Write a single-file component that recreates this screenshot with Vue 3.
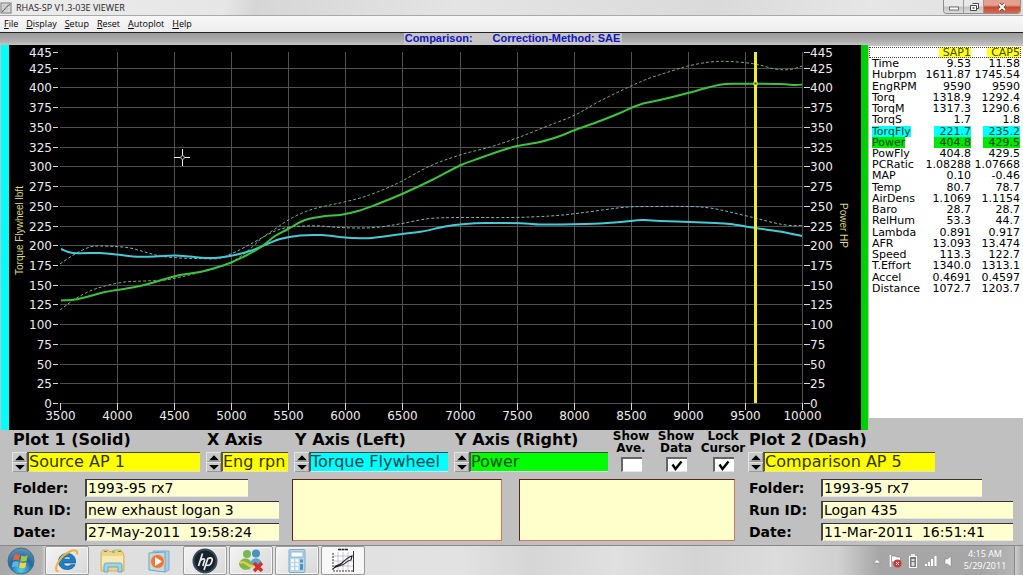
<script setup>
import { ref } from 'vue'

const menus = ['File', 'Display', 'Setup', 'Reset', 'Autoplot', 'Help']

const left = 60.5
const bottom = 403.5
const xAt = (rpm) => Math.round(left + ((rpm - 3500) * 742) / 6500 - 0.5) + 0.5
const yAt = (v) => Math.round(bottom - v * 0.7888 - 0.5) + 0.5

const rpmTicks = Array.from({ length: 14 }, (_, i) => 3500 + i * 500)
const valueTicks = [...Array.from({ length: 18 }, (_, i) => i * 25), 445]

function smooth(points) {
  let d = `M${points[0][0]} ${points[0][1]}`
  for (let i = 0; i < points.length - 1; i++) {
    const p0 = points[i - 1] || points[i]
    const p1 = points[i]
    const p2 = points[i + 1]
    const p3 = points[i + 2] || p2
    const c1 = [p1[0] + (p2[0] - p0[0]) / 6, p1[1] + (p2[1] - p0[1]) / 6]
    const c2 = [p2[0] - (p3[0] - p1[0]) / 6, p2[1] - (p3[1] - p1[1]) / 6]
    d += `C${c1.map((n) => n.toFixed(1)).join(' ')} ${c2.map((n) => n.toFixed(1)).join(' ')} ${p2[0]} ${p2[1]}`
  }
  return d
}

const curves = [
  {
    kind: 'torque dashed',
    d: smooth([[60, 264], [75, 254], [90, 247], [100, 246], [115, 246.5], [130, 248], [145, 252], [160, 256], [180, 258], [200, 258.5], [218, 258.5], [233, 253], [245, 247], [258, 240], [275, 231], [290, 227], [305, 226], [320, 226], [340, 227.5], [360, 228], [380, 227], [402, 223.5], [430, 218.5], [460, 217.5], [510, 217.5], [550, 216], [580, 213], [610, 209], [628, 207], [650, 206.5], [690, 206.5], [710, 208], [730, 212], [755, 218], [775, 223], [790, 225.5], [802, 225.5]])
  },
  {
    kind: 'power dashed',
    d: smooth([[60, 310], [75, 299], [90, 291], [105, 286], [125, 282], [145, 281], [165, 280], [185, 276], [205, 271], [220, 267], [235, 260], [250, 249], [262, 238], [275, 229], [290, 219], [310, 210], [330, 205], [340, 203], [360, 198], [380, 191], [402, 181], [430, 166], [460, 155], [490, 147], [517, 138], [545, 127], [575, 115], [600, 101], [631, 86], [650, 78], [670, 71.5], [688, 66], [710, 62], [730, 61.5], [755, 64], [775, 69], [790, 69.5], [802, 66]])
  },
  {
    kind: 'torque',
    d: smooth([[61, 249], [73, 253], [100, 253], [117, 254.5], [133, 256.5], [155, 256.5], [175, 255.5], [190, 256.5], [205, 258], [220, 257.5], [235, 255], [250, 251], [265, 245], [280, 239], [300, 235.5], [322, 235], [340, 237], [352, 238], [372, 238], [402, 234], [422, 231.5], [445, 226.5], [465, 224], [485, 223], [520, 223.2], [540, 224.5], [560, 224.5], [600, 223.5], [620, 222], [643, 220], [660, 221], [690, 222], [715, 223], [730, 224], [755, 228], [780, 231.5], [802, 236]])
  },
  {
    kind: 'power',
    d: smooth([[61, 300.5], [75, 299.5], [90, 296], [105, 292], [117, 290], [135, 287], [150, 283.5], [165, 279], [180, 275], [190, 273.5], [200, 272], [215, 268], [230, 263], [245, 256], [258, 249], [265, 244], [275, 236], [288, 229], [305, 220], [325, 216], [340, 215], [358, 211], [375, 205], [402, 194], [432, 180], [460, 165.5], [480, 158], [500, 151], [517, 146], [540, 142], [560, 136], [575, 130], [600, 121], [620, 113], [631, 108], [645, 103], [660, 100], [688, 93], [710, 87], [725, 84], [745, 83.8], [780, 84], [795, 85], [802, 84.5]])
  }
]

const readings = [
  ['Time', '9.53', '11.58'],
  ['Hubrpm', '1611.87', '1745.54'],
  ['EngRPM', '9590', '9590'],
  ['Torq', '1318.9', '1292.4'],
  ['TorqM', '1317.3', '1290.6'],
  ['TorqS', '1.7', '1.8'],
  ['TorqFly', '221.7', '235.2', 'cyan'],
  ['Power', '404.8', '429.5', 'green'],
  ['PowFly', '404.8', '429.5'],
  ['PCRatic', '1.08288', '1.07668'],
  ['MAP', '0.10', '-0.46'],
  ['Temp', '80.7', '78.7'],
  ['AirDens', '1.1069', '1.1154'],
  ['Baro', '28.7', '28.7'],
  ['RelHum', '53.3', '44.7'],
  ['Lambda', '0.891', '0.917'],
  ['AFR', '13.093', '13.474'],
  ['Speed', '113.3', '122.7'],
  ['T.Effort', '1340.0', '1313.1'],
  ['Accel', '0.4691', '0.4597'],
  ['Distance', '1072.7', '1203.7']
]

const selectors = ref([
  { id: 'plot1', label: 'Plot 1 (Solid)', value: 'Source AP 1', tone: 'yellow', order: 1 },
  { id: 'xaxis', label: 'X Axis', value: 'Eng rpn', tone: 'yellow', order: 2 },
  { id: 'yleft', label: 'Y Axis (Left)', value: 'Torque Flywheel', tone: 'cyan', order: 3 },
  { id: 'yright', label: 'Y Axis (Right)', value: 'Power', tone: 'green', order: 4 },
  { id: 'plot2', label: 'Plot 2 (Dash)', value: 'Comparison AP 5', tone: 'yellow', order: 6 }
])

const toggles = ref([
  { id: 'ave', lines: ['Show', 'Ave.'], on: false },
  { id: 'data', lines: ['Show', 'Data'], on: true },
  { id: 'lock', lines: ['Lock', 'Cursor'], on: true }
])

const runs = ref([
  { id: 'a', folder: '1993-95 rx7', run: 'new exhaust logan 3', date: '27-May-2011  19:58:24' },
  { id: 'b', folder: '1993-95 rx7', run: 'Logan 435', date: '11-Mar-2011  16:51:41' }
])
const notes = ref(['', ''])
</script>

<template>
  <div class="app">
    <header class="titlebar">
      <svg class="app-icon" viewBox="0 0 12 12" aria-hidden="true">
        <rect x="1" y="1" width="10" height="10" fill="#ddd" stroke="#777" />
        <path d="M4 1v10M7 1v10M1 4h10M1 7h10" stroke="#bbb" stroke-width=".6" />
        <path d="M2 9.500C5 8.500 5 5 10 2.500" fill="none" stroke="#444" />
      </svg>
      <h1>RHAS-SP V1.3-03E VIEWER</h1>
      <div class="window-buttons">
        <button aria-label="Minimize"><svg viewBox="0 0 12 10"><rect x="1.500" y="5" width="9" height="3" fill="#fff" stroke="#555" stroke-width=".8" /></svg></button>
        <button aria-label="Restore"><svg viewBox="0 0 12 10"><path d="M4.500 1.500h6v5h-2M2.500 3.500h6v5h-6z" fill="#fff" stroke="#444" /><rect x="4.500" y="5" width="2" height="2" fill="#777" /></svg></button>
        <button class="close" aria-label="Close"><svg viewBox="0 0 12 10"><path d="M3 2l6 6M9 2L3 8" stroke="#743528" stroke-width="3.400" /><path d="M3 2l6 6M9 2L3 8" stroke="#fff" stroke-width="2" /></svg></button>
      </div>
    </header>

    <nav class="menubar">
      <button v-for="m in menus" :key="m"><u>{{ m[0] }}</u>{{ m.slice(1) }}</button>
    </nav>

    <div class="banner"><p><span>Comparison:</span><span>Correction-Method: SAE</span></p></div>

    <main class="workspace">
      <div class="edge cyan"></div>
      <svg class="chart" viewBox="9 45 852 385" role="img" aria-label="Torque and power by engine rpm">
        <g class="grid">
          <path v-for="t in rpmTicks.slice(1)" :key="'v' + t" :d="`M${xAt(t)} 52V403`" />
          <path v-for="t in valueTicks.slice(0, 18)" :key="'h' + t" :d="`M60 ${yAt(t)}H803`" />
        </g>
        <g class="ticks">
          <path v-for="t in valueTicks" :key="'t' + t" :d="`M53 ${yAt(t)}h5M804 ${yAt(t)}h6`" />
          <path v-for="t in rpmTicks" :key="'b' + t" :d="`M${xAt(t)} 403v7`" />
        </g>
        <g class="labels">
          <text v-for="t in valueTicks" :key="'l' + t" x="52" :y="yAt(t) + 4" text-anchor="end">{{ t }}</text>
          <text v-for="t in valueTicks" :key="'r' + t" x="810" :y="yAt(t) + 4">{{ t }}</text>
          <text v-for="t in rpmTicks" :key="'x' + t" :x="xAt(t)" y="420" text-anchor="middle">{{ t }}</text>
        </g>
        <text class="axis-name" transform="translate(23 275) rotate(-90)">Torque Flywheel lbft</text>
        <text class="axis-name" transform="translate(840 203) rotate(90)">Power HP</text>
        <path v-for="c in curves" :key="c.kind" :class="['curve', c.kind]" :d="c.d" />
        <path d="M755.500 52V403" stroke="#f0ec30" stroke-width="3" />
        <rect x="754" y="82" width="3" height="3" fill="#333" stroke="#f5f02e" />
        <path d="M174 157.500h16M182.500 149v17" stroke="#eee" />
        <circle cx="182.500" cy="157.500" r="1.800" fill="#000" stroke="#bbb" />
      </svg>
      <div class="edge green"></div>
      <aside class="readings">
        <table>
          <thead>
            <tr><th></th><th scope="col"><span>SAP1</span></th><th scope="col"><span>CAP5</span></th></tr>
          </thead>
          <tbody>
            <tr v-for="r in readings" :key="r[0]" :class="r[3]">
              <th scope="row"><span>{{ r[0] }}</span></th>
              <td><span>{{ r[1] }}</span></td>
              <td><span>{{ r[2] }}</span></td>
            </tr>
          </tbody>
        </table>
      </aside>
    </main>

    <section class="controls">
      <div class="selectors">
        <div v-for="s in selectors" :key="s.id" class="selector" :style="{ order: s.order }">
          <label :for="s.id">{{ s.label }}</label>
          <div class="ring">
            <div class="spin">
              <button :aria-label="s.label + ' previous'"><svg viewBox="0 0 12 8"><path d="M0.500 7L6 1.500L11.500 7z" /></svg></button>
              <button :aria-label="s.label + ' next'"><svg viewBox="0 0 12 8"><path d="M0.500 1L6 6.500L11.500 1z" /></svg></button>
            </div>
            <input :id="s.id" v-model="s.value" :class="s.tone" type="text" />
          </div>
        </div>
        <div class="toggles">
          <label v-for="t in toggles" :key="t.id" :for="t.id">
            <span v-for="l in t.lines" :key="l">{{ l }}</span>
            <span class="box">
              <input :id="t.id" v-model="t.on" type="checkbox" />
              <svg v-if="t.on" viewBox="0 0 12 11"><path d="M1.500 4.500L4.500 9L10.500 1.500" /></svg>
            </span>
          </label>
        </div>
      </div>

      <div class="details">
        <div v-for="(r, i) in runs" :key="r.id" class="run" :style="{ order: i * 2 }">
          <label :for="'folder-' + r.id">Folder:</label>
          <input :id="'folder-' + r.id" v-model="r.folder" class="short" type="text" />
          <label :for="'run-' + r.id">Run ID:</label>
          <input :id="'run-' + r.id" v-model="r.run" type="text" />
          <label :for="'date-' + r.id">Date:</label>
          <input :id="'date-' + r.id" v-model="r.date" type="text" />
        </div>
        <div class="notes">
          <textarea v-model="notes[0]" aria-label="Plot 1 notes"></textarea>
          <textarea v-model="notes[1]" aria-label="Plot 2 notes"></textarea>
        </div>
      </div>
    </section>

    <footer class="taskbar">
      <button class="start" aria-label="Start">
        <svg viewBox="0 0 28 28">
          <defs>
            <radialGradient id="orb" cx=".5" cy=".85" r=".9"><stop offset="0" stop-color="#4fd0ee" /><stop offset=".5" stop-color="#22699e" /><stop offset="1" stop-color="#6f99b8" /></radialGradient>
          </defs>
          <circle cx="14" cy="14" r="13" fill="url(#orb)" stroke="#456a84" />
          <path d="M7 8.500c2-1.500 4-1.500 6-.5l-1 5.500c-2-1-4-1-6 .3z" fill="#e8633a" />
          <path d="M14.300 8.500c2 1 4 1 6.300-.2l-1 5.500c-2 1-4.300 1-6.300.1z" fill="#9ccb45" />
          <path d="M5.700 15.200c2-1.200 4-1.200 6-.3l-1 5.200c-2-.9-4-.9-5.800.3z" fill="#5fb5e8" />
          <path d="M13 15.300c2 .9 4.300.9 6.400 0l-1 5.200c-2 .9-4.300.9-6.300 0z" fill="#f8cf45" />
        </svg>
      </button>
      <button class="open" aria-label="Internet Explorer">
        <svg viewBox="0 0 28 28">
          <path d="M22.500 16H10.500c.3 3.200 5 4.300 7.300 1.700h4.300C18.500 25.500 5 23.500 5.500 14 6 4.500 21.500 3.500 22.500 13.500zM10.700 12.200h7.200c-.7-3.300-6.400-3.300-7.200 0z" fill="#1d7fc8" stroke="#0e4f8c" stroke-width=".7" />
          <path d="M5.500 24C-.5 25 5 11 15 5.500 20 2.700 25.500 2 24 7.500" fill="none" stroke="#f0b13d" stroke-width="2" />
        </svg>
      </button>
      <button aria-label="Windows Explorer">
        <svg viewBox="0 0 28 28">
          <path d="M2 6l2-3h5l2 2 5-2h6l2 3 1 3v15H2z" fill="#ecd587" stroke="#c9a750" stroke-width=".8" />
          <path d="M3 9h21v11H3z" fill="#f7eab4" /><path d="M5 4.500h3M13 5h3M19 4.500h3" stroke="#5b9b4f" />
          <path d="M5 25v-7q0-2 2-2h14q2 0 2 2v7h-4v-5h-10v5z" fill="#9fd2ea" stroke="#5ba0c4" stroke-width=".8" />
        </svg>
      </button>
      <button aria-label="Media Player">
        <svg viewBox="0 0 28 28">
          <path d="M8 4h16v19l-4 2z" fill="#a9cfe3" stroke="#6ba4c2" stroke-width=".8" />
          <path d="M4 6l16-1v20l-16-2z" fill="#bfdcea" stroke="#6ba4c2" />
          <circle cx="12.500" cy="14.500" r="7" fill="#e9793b" stroke="#f7c6a2" /><path d="M10 10l7 4.500-7 4.500z" fill="#fff" />
        </svg>
      </button>
      <button class="open" aria-label="HP">
        <svg viewBox="0 0 28 28">
          <circle cx="14" cy="14" r="11.500" fill="#19222b" stroke="#36495a" stroke-width="2" />
          <path d="M11.500 6.500L7.500 19M9.500 13.500c1.500-2 4.500-2.500 4 0L11.800 19M17 11l-4 12M16.500 12c3-2 5.500-1 4.500 2-1 4-3 5-6 4" fill="none" stroke="#e5edf2" stroke-width="1.700" />
        </svg>
      </button>
      <button class="open" aria-label="Messenger">
        <svg viewBox="0 0 28 28">
          <circle cx="10" cy="7" r="4" fill="#78b854" /><circle cx="19" cy="6.500" r="4" fill="#4a93bd" />
          <path d="M13 18c0-9 12-9 12 0z" fill="#5da5c9" />
          <path d="M2 17c1-7 12-8 13 1l-2 4c-5 2-10 0-11-5z" fill="#77b848" />
          <path d="M3 16c6-4 6 5 14 3" fill="none" stroke="#f0c553" stroke-width="2.500" />
          <path d="M17 16l8 8M25 16l-8 8" stroke="#cf2f2f" stroke-width="3.500" />
        </svg>
      </button>
      <button class="open" aria-label="Calculator">
        <svg viewBox="0 0 28 28">
          <rect x="6" y="2.500" width="16" height="23" rx="1" fill="#b7d6e8" stroke="#82abc3" />
          <rect x="8" y="5" width="12" height="5" fill="#f4fbff" stroke="#7ca3bb" stroke-width=".7" />
          <path d="M8 13.500h8M8 17.500h8M8 21.500h8" stroke="#fff" stroke-width="2.500" stroke-dasharray="3 1.500" />
          <path d="M18.500 12.500v3M18.500 17v6" stroke="#4d93c1" stroke-width="3" />
        </svg>
      </button>
      <button class="open active" aria-label="RHAS-SP Viewer">
        <svg viewBox="0 0 28 28">
          <path d="M4 4h21v21H4z" fill="#fff" /><path d="M9 5v19M14 5v19M19 5v19M4 9h20M4 14h20M4 19h20" stroke="#b9a9c4" stroke-width=".7" />
          <path d="M24.500 4v21" stroke="#333" /><path d="M4 24h20M4 6v18" stroke="#333" stroke-dasharray="2 1" /><path d="M9 2.500h10" stroke="#222" stroke-width="1.500" stroke-dasharray="3 .5" />
          <path d="M5 21c2-4 5-2 8-5s6-6 10-7l-1 4c-4 0-5 4-9 5-3 1-5 1-8 3z" fill="none" stroke="#222" stroke-width="1.200" />
        </svg>
      </button>
      <div class="tray">
        <svg viewBox="0 0 14 14"><path d="M3.500 9L7 5.500L10.500 9z" fill="#fff" stroke="#777" stroke-width=".5" /></svg>
        <svg viewBox="0 0 14 14"><path d="M2.500 1v12" stroke="#fff" stroke-width="1.500" /><path d="M3.500 2h4l1 1h4v5h-9z" fill="#fff" stroke="#777" stroke-width=".6" /><circle cx="9.500" cy="9.500" r="4" fill="#cf3a38" /><path d="M8 8l3 3M11 8l-3 3" stroke="#fff" /></svg>
        <svg viewBox="0 0 14 14"><rect x="3.500" y="2.500" width="7" height="11" fill="#777" stroke="#fff" /><path d="M5 1h4M5.500 6h3M5.500 9h3M5.500 11h3" stroke="#fff" stroke-width="1.400" /></svg>
        <svg viewBox="0 0 14 14"><path d="M2 12v-2M5 12V8M8 12V5M11.500 12V2" stroke="#fff" stroke-width="2" /></svg>
        <svg viewBox="0 0 14 14"><path d="M3 5h2.500L9 2v11L5.500 10H3z" fill="#fff" stroke="#777" stroke-width=".5" /></svg>
      </div>
      <div class="clock"><span>4:15 AM</span><span>5/29/2011</span></div>
      <button class="show-desktop" aria-label="Show desktop"></button>
    </footer>
  </div>
</template>

<style>
html, body { margin: 0; background: #c0c0c0; }
</style>

<style scoped>
.app { display: flex; flex-direction: column; min-height: 100vh; overflow: hidden; font-family: "DejaVu Sans", Verdana, sans-serif; color: #000; }
button, input, textarea { font: inherit; color: inherit; margin: 0; padding: 0; border: 0; border-radius: 0; background: none; box-sizing: border-box; min-width: 0; }
svg { display: block; }

.titlebar { display: flex; align-items: center; height: 16px; padding: 0 2px 0 0; background: linear-gradient(100deg, #ececec 0, #e6e6e6 22%, #d6d6d6 25%, #e4e4e4 45%, #dadada 70%, #e6e6e6 85%, #e0e0e0 100%); box-shadow: inset 0 -1px #a9a9a9; }
.app-icon { width: 12px; height: 12px; margin-right: 4px; }
h1 { flex: 1; margin: 0; font: 9px/16px "Open Sans", "Noto Sans", sans-serif; color: #222; }
.window-buttons { display: flex; align-self: flex-start; height: 13px; border: 1px solid #8f8f8f; border-top: 0; border-radius: 0 0 4px 4px; overflow: hidden; }
.window-buttons button { width: 20px; height: 13px; display: grid; place-items: center; background: linear-gradient(#e8e8e8 45%, #c4c4c4 55%, #dcdcdc); border-right: 1px solid #999; }
.window-buttons svg { width: 12px; height: 10px; }
.window-buttons .close { width: 36px; border-right: 0; background: linear-gradient(#e3a091 40%, #c24b31 55%, #d9694c); }

.menubar { display: flex; gap: 8px; height: 17px; padding: 0 4px; background: linear-gradient(#f8f8f8, #ededed); border-bottom: 1px solid #222; box-sizing: border-box; font: 9px/14px "Open Sans", "Noto Sans", sans-serif; }

.banner { display: flex; justify-content: center; height: 12px; padding-left: 3px; background: linear-gradient(#999, #b0b0b0 70%, #c4c4c4); }
.banner p { display: flex; gap: 20px; margin: 0; padding: 0 2px 0 1px; background: #c6c6c6; font: bold 11px/11px "Liberation Sans", Arial, sans-serif; color: #1414c0; white-space: nowrap; }

.workspace { display: flex; padding-left: 1px; }
.edge { width: 8px; }
.edge.green { width: 7px; background: #00d000; }
.chart { flex: 1; min-width: 0; background: #000; }
.grid path { stroke: #505050; }
.ticks path { stroke: #d8d8d8; }
.labels text { font-size: 12px; fill: #ececec; }
.axis-name { font: 10px "Liberation Sans", Arial, sans-serif; fill: #dcd878; }
.curve { fill: none; stroke-width: 2; }
.curve.torque { stroke: #43ccd8; }
.curve.power { stroke: #3cc43c; }
.curve.dashed { stroke-width: 1; stroke-dasharray: 3 2; }
.curve.torque.dashed { stroke: #7fb8bc; }
.curve.power.dashed { stroke: #6fb070; }

.readings { width: 154px; align-self: flex-start; margin: 1px 0 0 1px; height: 372px; padding-top: 1px; background: #fff; box-sizing: border-box; }
table { width: 152px; height: 247px; border-collapse: collapse; table-layout: fixed; font-size: 11px; line-height: 11px; white-space: nowrap; }
thead tr { outline: 1px dotted #444; outline-offset: -1px; }
th, td { padding: 0; font-weight: normal; text-align: right; }
th:first-child { width: 49px; padding-left: 3px; text-align: left; }
th span, td span { display: block; width: max-content; margin-left: auto; }
th:first-child span { margin-left: 0; }
thead span { padding-left: 4px; background: #ffff20; color: #4a4700; }
td:last-child, th:last-child { padding-right: 1px; }
tr.cyan span { background: #00ffff; }
tr.green span { background: #00e800; }
tbody tr.cyan, tbody tr.green { background: none; color: #123c12; }
tr.cyan td span, tr.green td span { padding-left: 6px; }

.cyan:not(tr) { background: #00ffff; }
.green:not(tr):not(.edge) { background: #00ff00; }
.yellow { background: #ffff00; }

.controls { display: flex; flex-direction: column; gap: 7px; flex: 1; padding: 0 0 4px 12px; background: #c0c0c0; }
.selectors { display: grid; grid-template-columns: 188fr 82fr 154fr 154fr 128fr 187fr 82fr; gap: 6px; }
.selector { display: flex; flex-direction: column; gap: 2px; min-width: 0; }
.selector label { padding-left: 1px; font-size: 16px; font-weight: bold; line-height: 20px; white-space: nowrap; }
.ring { display: flex; height: 20px; }
.spin { display: flex; flex-direction: column; width: 15px; }
.spin button { flex: 1; display: grid; place-items: center; background: #c8c8c8; box-shadow: inset 1px 1px #e4e4e4, inset -1px -1px #999; }
.spin svg { width: 12px; height: 7px; }
.ring input { flex: 1; width: 0; font-size: 16px; line-height: 18px; border-top: 1px solid #444; border-left: 2px solid #555; border-bottom: 1px solid #e0e0e0; }
.ring input.yellow { color: #333000; }
.ring input.cyan { color: #004048; }
.ring input.green { color: #004800; }

.toggles { order: 5; display: grid; grid-template-columns: 34fr 56fr 38fr; }
.toggles label { display: flex; flex-direction: column; align-items: center; font-size: 12px; font-weight: bold; line-height: 12px; white-space: nowrap; min-width: 0; }
.box { position: relative; margin-top: 3px; width: 21px; height: 15px; }
.box input { appearance: none; display: block; width: 100%; height: 100%; background: #fff; border-top: 2px solid #666; border-left: 2px solid #666; border-bottom: 1px solid #e4e4e4; }
.box svg { position: absolute; left: 5px; top: 3px; width: 12px; height: 11px; pointer-events: none; }
.box path { fill: none; stroke: #000; stroke-width: 2.400; }

.details { display: grid; grid-template-columns: 267fr 443fr 265fr; gap: 13px; padding-right: 10px; }
.run { display: grid; grid-template-columns: 73px 1fr; row-gap: 4px; }
.run label { padding-left: 1px; font-size: 14px; font-weight: bold; line-height: 18px; white-space: nowrap; }
.run input { width: 100%; height: 18px; padding-left: 1px; font-size: 14px; line-height: 16px; background: #ffffd0; border-top: 1px solid #333; border-left: 2px solid #444; border-bottom: 1px solid #e8e8e0; }
.run input.short { width: 84%; }
.notes { order: 1; display: grid; grid-template-columns: 210fr 216fr; gap: 17px; }
.notes textarea { display: block; width: 100%; height: 62px; resize: none; background: #ffffcc; border: 1px solid #d07860; border-top-color: #602020; border-left-color: #602020; }

.taskbar { display: flex; gap: 2px; height: 30px; box-sizing: border-box; border-top: 1px solid #888; background: linear-gradient(90deg, #a8a8a8 0, #b4b4b4 42px, #dedede 46px, #e2e2e2 45%, #d6d6d6 52%, #e0e0e0 60%, #d4d4d4 68%, #dcdcdc 76%, #d0d0d0 82%, #a6a6a6 86%, #a6a6a6 96%, #b8b8b8 100%); }
.taskbar > button { width: 44px; display: grid; place-items: center; box-sizing: border-box; }
.taskbar > button svg { width: 28px; height: 28px; }
.taskbar > .start { width: 43px; padding-right: 2px; }
.taskbar .open { border: 1px solid #999; border-radius: 2px; background: linear-gradient(135deg, #f4f4f4, #d8d8d8); box-shadow: inset 0 0 0 1px #f6f6f6; }
.taskbar .open.active { background: #f8f8f8; }
.tray { display: flex; align-items: center; gap: 4px; margin-left: auto; }
.tray svg { width: 14px; height: 14px; }
.clock { display: flex; flex-direction: column; width: 54px; padding-top: 2px; text-align: center; font: 9px/12px "Open Sans", "Noto Sans", sans-serif; color: #fff; }
.taskbar > .show-desktop { width: 9px; border-left: 1px solid #888; background: linear-gradient(90deg, #ccc, #aaa); }
</style>
